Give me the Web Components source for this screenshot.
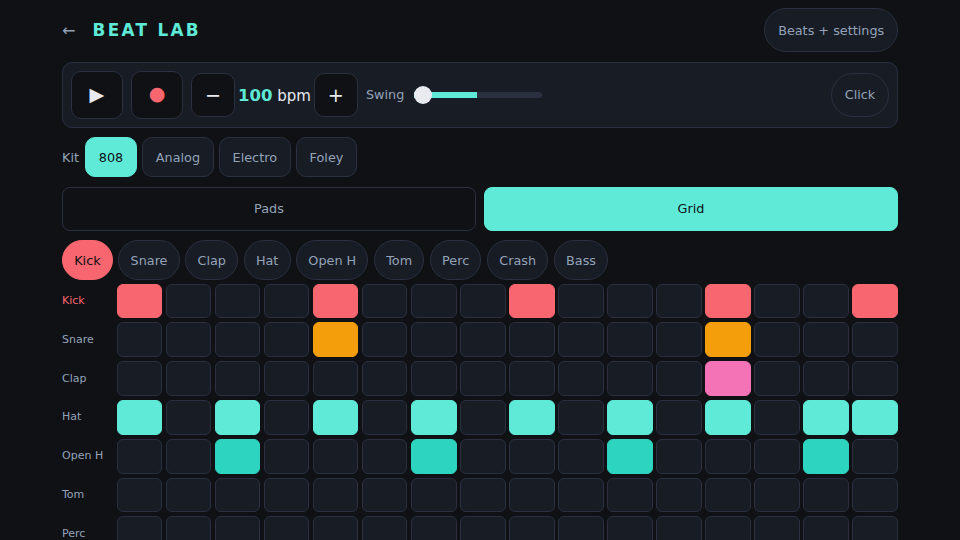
<!doctype html>
<html lang="en">
<head>
<meta charset="utf-8">
<title>Beat Lab</title>
<style>
html, body { margin: 0; height: 100%; overflow: hidden; background: #0f1115; }
body { font-family: "DejaVu Sans", sans-serif; color: #e8eaf0; }
</style>
</head>
<body>
<beat-app></beat-app>
<script>
const TRACKS = ['Kick', 'Snare', 'Clap', 'Hat', 'Open H', 'Tom', 'Perc', 'Crash', 'Bass'];

const KITS = ['808', 'Analog', 'Electro', 'Foley'];

const PATTERN = {
  Kick: { color: '#f8666f', steps: [0, 4, 8, 12, 15] },
  Snare: { color: '#f59e0b', steps: [4, 12] },
  Clap: { color: '#f472b6', steps: [12] },
  Hat: { color: '#5eead7', steps: [0, 2, 4, 6, 8, 10, 12, 14, 15] },
  'Open H': { color: '#2dd4c0', steps: [2, 6, 10, 14] },
};

const define =
  (name, css, html, extend = HTMLElement) => {
    const template = document.createElement('template');
    template.innerHTML = `<style>${css}</style>${html}`;
    customElements.define(name, class extends extend {
      constructor() {
        super();
        this.attachShadow({ mode: 'open' });
        this.shadowRoot.append(template.content.cloneNode(true));
      }
    });
  };

define('beat-button', /* css */`
:host {
  display: inline-flex;
  align-items: center;
  justify-content: center;
  box-sizing: border-box;
  height: var(--h, 44px);
  min-width: var(--w, 0);
  padding: 0 var(--px, 12.8px) var(--pb, 0);
  border: 1px solid #2a3040;
  border-radius: var(--r, 10px);
  background: #181c25;
  color: #94a3b8;
  font-size: var(--fs, 12.8px);
  white-space: nowrap;
}
:host([dark]) { background: #0f1115; color: #e8eaf0; }
:host([on]) { background: #5eead7; border-color: #5eead7; color: #0f1115; }
:host([hot]) { background: #f8666f; border-color: #f8666f; color: #0f1115; }
`, '<slot></slot>');

define('beat-header', /* css */`
:host {
  display: flex;
  align-items: center;
  height: 44px;
}
.back { width: 30.5px; color: #94a3b8; font-size: 16px; }
h1 {
  margin: 0;
  color: #5eead7;
  font-size: 16.8px;
  font-weight: 700;
  letter-spacing: 2.35px;
}
beat-button { margin-left: auto; --r: 22px; }
`, `
<span class="back">←</span>
<h1>BEAT LAB</h1>
<beat-button>Beats + settings</beat-button>
`);

define('beat-slider', /* css */`
:host {
  display: block;
  position: relative;
  width: 128px;
  height: 18px;
}
.track {
  position: absolute;
  left: 0;
  right: 0;
  top: 6px;
  height: 6px;
  border-radius: 3px;
  background: #2a3040;
}
.fill {
  position: absolute;
  left: 0;
  top: 6px;
  width: 63px;
  height: 6px;
  background: #5eead7;
}
.thumb {
  position: absolute;
  left: 0;
  top: 0;
  width: 18px;
  height: 18px;
  border-radius: 50%;
  background: #e8eaf0;
}
`, '<div class="track"></div><div class="fill"></div><div class="thumb"></div>');

define('beat-transport', /* css */`
:host {
  display: flex;
  align-items: center;
  box-sizing: border-box;
  height: 66px;
  padding: 0 8px;
  border: 1px solid #2a3040;
  border-radius: 10px;
  background: #181c25;
}
.big { --w: 52px; --h: 48px; --px: 0; --pb: 2px; margin-right: 8px; --fs: 19.2px; }
.big.record { --pb: 3px; }
.step { --w: 44px; --px: 0; --fs: 19.2px; }
.tempo { margin: 0 3px; font-size: 15px; white-space: nowrap; }
.tempo b { color: #5eead7; font-size: 16.5px; }
.swing { margin: 0 10px 0 8px; padding-bottom: 1px; color: #94a3b8; font-size: 12.8px; }
.click { margin-left: auto; --r: 22px; --pb: 1px; }
`, `
<beat-button class="big" dark>▶</beat-button>
<beat-button class="big record" dark><span style="color:#f8666f">●</span></beat-button>
<beat-button class="step" dark>−</beat-button>
<span class="tempo"><b>100</b> bpm</span>
<beat-button class="step" dark>+</beat-button>
<span class="swing">Swing</span>
<beat-slider></beat-slider>
<beat-button class="click">Click</beat-button>
`);

define('beat-kits', /* css */`
:host {
  display: flex;
  align-items: center;
  gap: 5px;
  height: 40px;
  margin-top: -1px;
  color: #94a3b8;
  font-size: 12.8px;
}
beat-button { --h: 40px; }
span { margin-right: 1px; }
`, `<span>Kit</span>${KITS.map((kit, i) =>
  `<beat-button ${i === 0 ? 'on' : ''}>${kit}</beat-button>`).join('')}`);

define('beat-tabs', /* css */`
:host {
  display: grid;
  grid-template-columns: 1fr 1fr;
  gap: 8px;
}
beat-button { --r: 8px; --pb: 1px; background: transparent; }
beat-button[on] { background: #5eead7; }
`, '<beat-button>Pads</beat-button><beat-button on>Grid</beat-button>');

define('beat-chips', /* css */`
:host {
  display: flex;
  gap: 5.6px;
  margin-top: -1px;
}
beat-button { --h: 40px; --r: 20px; --px: 11.2px; }
`, TRACKS.map((track, i) =>
  `<beat-button ${i === 0 ? 'hot' : ''}>${track}</beat-button>`).join(''));

define('beat-cell', /* css */`
:host {
  display: block;
  box-sizing: border-box;
  border: 1px solid #2a3040;
  border-radius: 6px;
  background: #181c25;
}
:host([color]) { border-color: var(--c); background: var(--c); }
`, '');

define('beat-grid', /* css */`
:host {
  display: grid;
  grid-template-columns: 51.2px repeat(16, 1fr);
  grid-auto-rows: 34.83px;
  gap: 4px 3.4px;
  margin-top: -6.5px;
}
.label {
  display: flex;
  align-items: center;
  padding-bottom: 1.1px;
  color: #94a3b8;
  font-size: 11px;
  white-space: nowrap;
}
.label.hot { color: #f8666f; }
`, TRACKS.map((track, i) => {
  const { color, steps = [] } = PATTERN[track] || {};
  const cells = Array.from({ length: 16 }, (_, step) =>
    steps.includes(step)
      ? `<beat-cell color style="--c:${color}"></beat-cell>`
      : '<beat-cell></beat-cell>').join('');
  return `<span class="label ${i === 0 ? 'hot' : ''}">${track}</span>${cells}`;
}).join(''));

define('beat-app', /* css */`
:host {
  display: flex;
  flex-direction: column;
  gap: 10px;
  box-sizing: border-box;
  width: 960px;
  padding: 8px 62px 0;
}
`, `
<beat-header></beat-header>
<beat-transport></beat-transport>
<beat-kits></beat-kits>
<beat-tabs></beat-tabs>
<beat-chips></beat-chips>
<beat-grid></beat-grid>
`);
</script>
</body>
</html>
